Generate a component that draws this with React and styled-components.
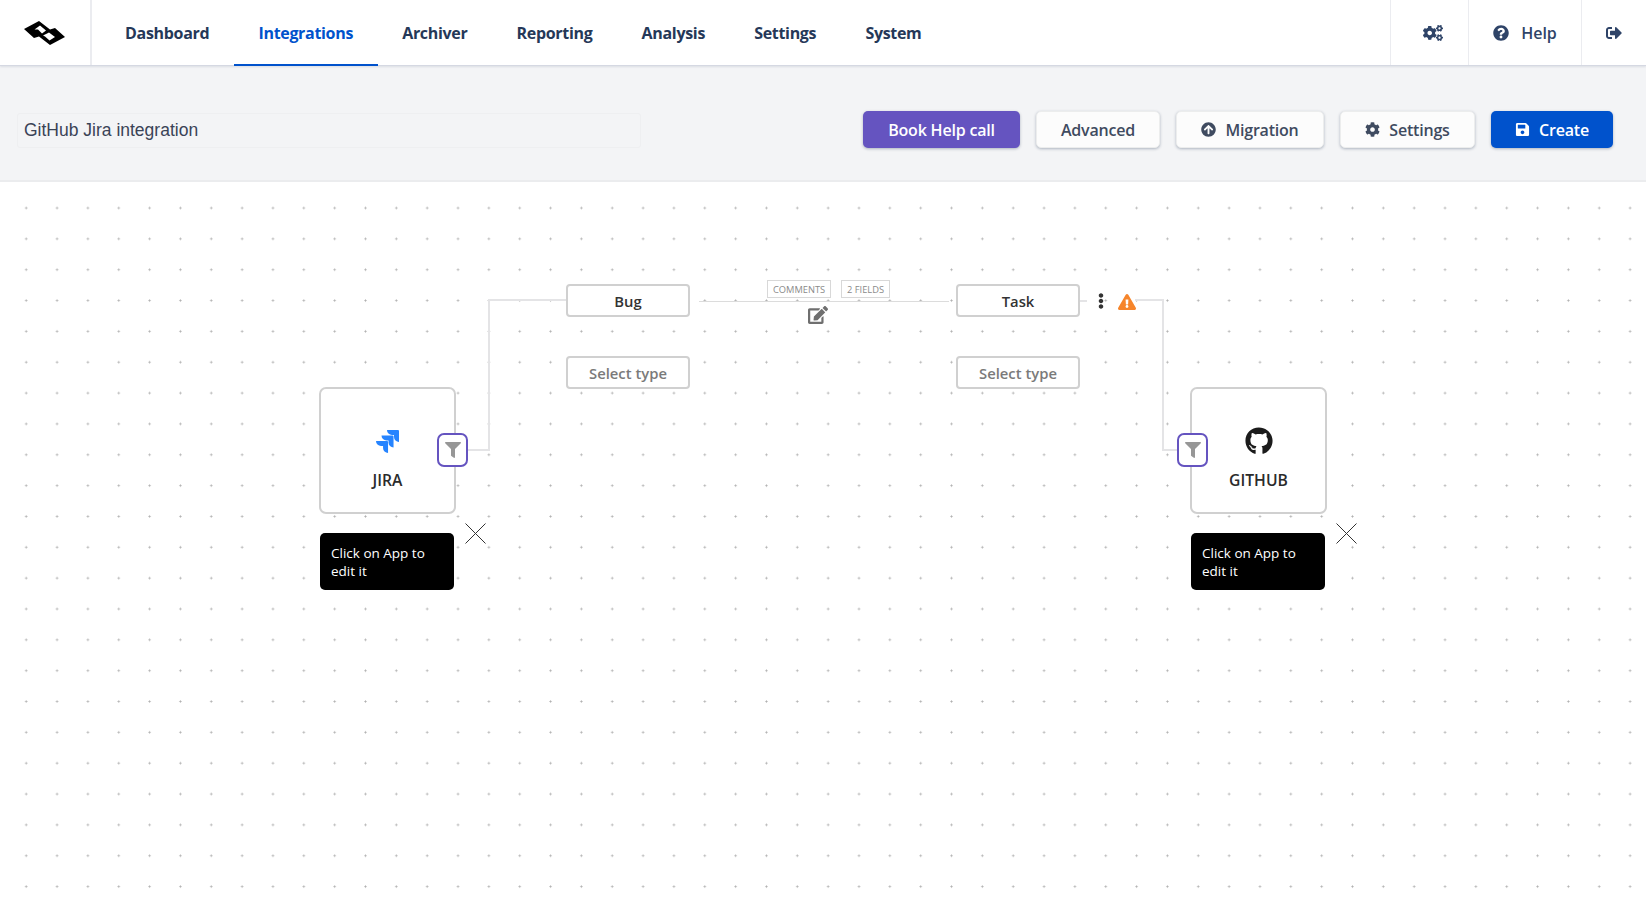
import React from 'react';
import styled, { createGlobalStyle } from 'styled-components';
import { FaCogs, FaQuestionCircle, FaSignOutAlt, FaArrowCircleUp, FaCog, FaSave, FaFilter, FaEdit, FaEllipsisV, FaExclamationTriangle, FaGithub } from 'react-icons/fa';
import { SiJira } from 'react-icons/si';

const GlobalStyle = createGlobalStyle`
  html, body, #root { margin: 0; height: 100%; }
  body { font-family: "Open Sans", "Liberation Sans", sans-serif; background: #fff; color: #253858; }
  * { box-sizing: border-box; }
`;

const Page = styled.div`
  height: 900px;
  display: flex;
  flex-direction: column;
  overflow: hidden;
`;

const Header = styled.header`
  height: 66px;
  flex: none;
  display: flex;
  align-items: stretch;
  background: #fff;
  border-bottom: 1px solid #d5d8e2;
  box-shadow: 0 1px 2px rgba(9, 30, 66, 0.1);
  position: relative;
  z-index: 2;
`;

const LogoCell = styled.div`
  width: 92px;
  display: flex;
  align-items: center;
  justify-content: center;
  padding-right: 2px;
  border-right: 2px solid #ebecf0;
`;

const Nav = styled.nav`
  display: flex;
  flex: 1;
  padding-left: 8.5px;
`;

const NavItem = styled.a`
  display: flex;
  align-items: center;
  padding: 2px 24.6px 0;
  font-size: 16px;
  font-weight: 700;
  letter-spacing: -0.32px;
  color: ${props => (props.$active ? '#0052cc' : '#253858')};
  border-bottom: 2px solid ${props => (props.$active ? '#0052cc' : 'transparent')};
  margin-bottom: -1px;
`;

const HeaderCell = styled.div`
  width: ${props => props.$width}px;
  display: flex;
  align-items: center;
  justify-content: center;
  gap: 12px;
  padding-left: ${props => props.$shift || 0}px;
  border-left: 1px solid #ebecf0;
  font-size: 16px;
  font-weight: 600;
  color: #2f4468;
  svg { font-size: ${props => props.$icon || 16}px; }
`;

const Toolbar = styled.div`
  height: 116px;
  flex: none;
  display: flex;
  align-items: center;
  padding: 12px 33px 0 17px;
  background: #f3f4f6;
  border-bottom: 2px solid #ebecee;
`;

const NameInput = styled.div`
  width: 624px;
  height: 35px;
  display: flex;
  align-items: center;
  padding: 1px 0 0 6px;
  margin-right: auto;
  margin-top: 2px;
  border: 1px solid #eeeff1;
  border-radius: 3px;
  font-family: "Liberation Sans", Arial, sans-serif;
  font-size: 17.5px;
  color: #3a4356;
`;

const Button = styled.button`
  width: ${props => props.$width}px;
  height: 37px;
  margin-left: 16px;
  display: flex;
  align-items: center;
  justify-content: center;
  gap: 9px;
  padding: 1px 0 0;
  border: ${props => (props.$bg ? '0' : '1px solid #eceded')};
  border-radius: 5px;
  background: ${props => props.$bg || '#fcfcfc'};
  color: ${props => (props.$bg ? '#fff' : '#3f4b60')};
  font-family: inherit;
  font-size: 16px;
  font-weight: 600;
  letter-spacing: -0.2px;
  box-shadow: 0 1px 3px rgba(9, 30, 66, 0.3);
  svg { font-size: 15px; }
`;

const Canvas = styled.main`
  flex: 1;
  position: relative;
  background-color: #fff;
  background-image: radial-gradient(circle, #b0b0b0 0.8px, transparent 1.3px);
  background-size: 30.85px 30.85px;
  background-position: 10.8px 10.6px;
`;

const Placed = styled.div`
  position: absolute;
  left: ${props => props.$x}px;
  top: ${props => props.$y - 182}px;
`;

const Line = styled(Placed)`
  width: ${props => props.$w}px;
  height: ${props => props.$h}px;
  background: ${props => props.$color || '#e4e4e6'};
`;

const AppCard = styled(Placed)`
  width: ${props => props.$w}px;
  height: 127px;
  display: flex;
  flex-direction: column;
  align-items: center;
  padding-top: 37px;
  background: #fff;
  border: 2px solid #d0d0d0;
  border-radius: 7px;
  font-size: 15.7px;
  font-weight: 600;
  color: #2b2b2b;
`;

const AppIcon = styled.div`
  height: 30px;
  display: flex;
  align-items: center;
  justify-content: center;
  margin-bottom: 13px;
  color: ${props => props.$color};
  font-size: ${props => props.$size}px;
`;

const FilterBox = styled(Placed)`
  width: 31px;
  height: 34px;
  display: flex;
  align-items: center;
  justify-content: center;
  background: #fff;
  border: 2px solid #6554c0;
  border-radius: 7px;
  color: #979797;
  font-size: 16px;
`;

const Hint = styled(Placed)`
  width: 134px;
  height: 57px;
  padding: 11px 11px;
  background: #000;
  border-radius: 5px;
  color: #fff;
  font-size: 13.5px;
  line-height: 18px;
`;

const TypeBox = styled(Placed)`
  width: 124px;
  height: 33px;
  display: flex;
  align-items: center;
  justify-content: center;
  background: #fff;
  border: 2px solid #d0d0d0;
  border-radius: 4px;
  font-size: 14.8px;
  font-weight: 600;
  color: ${props => (props.$muted ? '#7a7a7a' : '#333')};
`;

const Tag = styled(Placed)`
  height: 18px;
  padding: 0 5px;
  display: flex;
  align-items: center;
  background: #fff;
  border: 1px solid #d8d8d8;
  font-size: 9.3px;
  color: #8a8a8a;
`;

const Glyph = styled(Placed)`
  display: flex;
  color: ${props => props.$color};
  font-size: ${props => props.$size}px;
`;

const Cross = () => (
  <svg width="21" height="21" viewBox="0 0 21 21" fill="none" stroke="#333" strokeWidth="1">
    <path d="M0.5 0.5 20.5 20.5M20.5 0.5 0.5 20.5" />
  </svg>
);

const Logo = () => (
  <svg width="41" height="24" viewBox="0 0 41 24" fillRule="evenodd">
    <path d="M0 8 15 0 26 8.5 31 7 41 16 26 24 15 15.5 10 17ZM10.5 8.5 16 4.5 22 9.5 18 12.5 14 8.5ZM19 14.5 25 11.5 31 16 25.5 19.5 21 15.5Z" fill="#000" />
  </svg>
);

const App = () => {
  const navs = ['Dashboard', 'Integrations', 'Archiver', 'Reporting', 'Analysis', 'Settings', 'System'];
  return (
    <Page>
      <GlobalStyle />
      <Header>
        <LogoCell><Logo /></LogoCell>
        <Nav>
          {navs.map(name => <NavItem key={name} $active={name === 'Integrations'}>{name}</NavItem>)}
        </Nav>
        <HeaderCell $width={78} $icon={20} $shift={7}><FaCogs /></HeaderCell>
        <HeaderCell $width={113}><FaQuestionCircle />Help</HeaderCell>
        <HeaderCell $width={65}><FaSignOutAlt /></HeaderCell>
      </Header>
      <Toolbar>
        <NameInput>GitHub Jira integration</NameInput>
        <Button $width={157} $bg="#6554c0">Book Help call</Button>
        <Button $width={124}>Advanced</Button>
        <Button $width={148}><FaArrowCircleUp />Migration</Button>
        <Button $width={135}><FaCog />Settings</Button>
        <Button $width={122} $bg="#0052cc"><FaSave />Create</Button>
      </Toolbar>
      <Canvas>
        <Line $x={488} $y={299} $w={2} $h={151} />
        <Line $x={488} $y={299} $w={78} $h={2} />
        <Line $x={468} $y={449} $w={22} $h={2} />
        <Line $x={699} $y={301} $w={250} $h={1} $color="#dcdcdc" />
        <Line $x={1080} $y={300} $w={7} $h={2} />
        <Line $x={1135} $y={299} $w={28} $h={2} />
        <Line $x={1162} $y={299} $w={2} $h={151} />
        <Line $x={1162} $y={449} $w={16} $h={2} />

        <AppCard $x={319} $y={387} $w={137}>
          <AppIcon $color="#2684ff" $size={23}><SiJira /></AppIcon>
          JIRA
        </AppCard>
        <FilterBox $x={437} $y={433}><FaFilter /></FilterBox>
        <Hint $x={320} $y={533}>Click on App to edit it</Hint>
        <Glyph $x={465} $y={523} $color="#333" $size={21}><Cross /></Glyph>

        <TypeBox $x={566} $y={284}>Bug</TypeBox>
        <TypeBox $x={566} $y={356} $muted>Select type</TypeBox>
        <TypeBox $x={956} $y={284}>Task</TypeBox>
        <TypeBox $x={956} $y={356} $muted>Select type</TypeBox>

        <Tag $x={767} $y={280}>COMMENTS</Tag>
        <Tag $x={841} $y={280}>2 FIELDS</Tag>
        <Glyph $x={808} $y={305} $color="#6f6f6f" $size={20}><FaEdit /></Glyph>
        <Glyph $x={1093} $y={293} $color="#333" $size={16}><FaEllipsisV /></Glyph>
        <Glyph $x={1118} $y={293} $color="#f6852b" $size={18}><FaExclamationTriangle /></Glyph>

        <AppCard $x={1190} $y={387} $w={137}>
          <AppIcon $color="#1b1b1b" $size={28}><FaGithub /></AppIcon>
          GITHUB
        </AppCard>
        <FilterBox $x={1177} $y={433}><FaFilter /></FilterBox>
        <Hint $x={1191} $y={533}>Click on App to edit it</Hint>
        <Glyph $x={1336} $y={523} $color="#333" $size={21}><Cross /></Glyph>
      </Canvas>
    </Page>
  );
};

export default App;
